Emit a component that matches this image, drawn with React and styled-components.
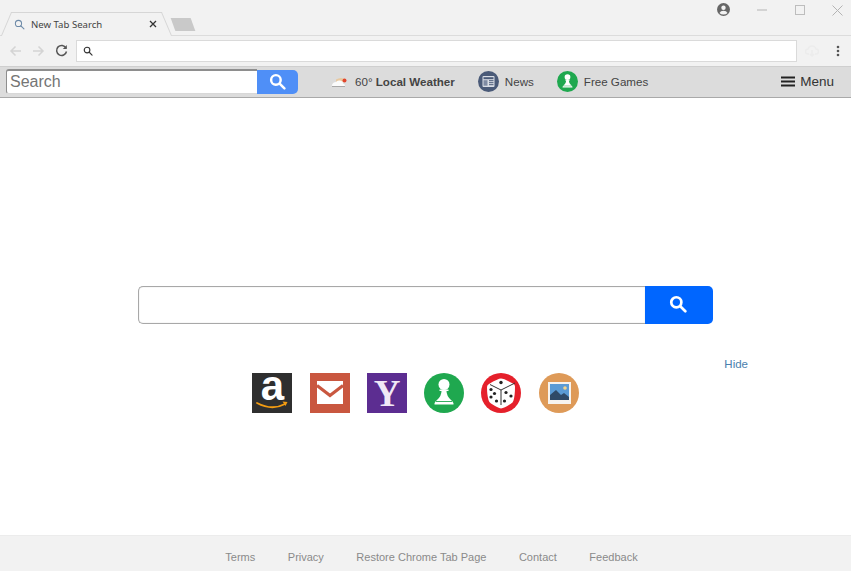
import React from 'react'
import styled, { createGlobalStyle } from 'styled-components'

const GlobalStyle = createGlobalStyle`
  html, body { margin: 0; padding: 0; background: #fff; overflow: hidden; }
  body { font-family: "Liberation Sans", Arial, sans-serif; }
  * { box-sizing: border-box; }
`

const Page = styled.div`
  width: 851px;
  height: 571px;
  display: flex;
  flex-direction: column;
`

// BROWSER CHROME
const TabStrip = styled.div`
  height: 36px;
  flex: none;
  display: flex;
  align-items: flex-end;
  background: #f2f2f2;
  border-bottom: 1px solid #dcdcdc;
  padding-left: 6px;
  position: relative;
`
const Tab = styled.div`
  width: 161px;
  height: 24px;
  margin-bottom: -1px;
  position: relative;
  display: flex;
  align-items: center;
  padding: 0 10px 0 8px;
  font-family: "Noto Sans", sans-serif;
  font-size: 9.6px;
  color: #444;
  z-index: 1;

  &::before, &::after {
    content: '';
    position: absolute;
    top: 0;
    bottom: 0;
    width: 60%;
    background: #f2f2f2;
    border-top: 1px solid #d6d6d6;
    z-index: -1;
  }
  &::before {
    left: 0;
    border-left: 1px solid #d6d6d6;
    transform: skewX(-23deg);
  }
  &::after {
    right: 0;
    border-right: 1px solid #d6d6d6;
    transform: skewX(23deg);
  }
`
const TabTitle = styled.span`
  margin-left: 6px;
  flex: 1;
`
const NewTab = styled.div`
  width: 20px;
  height: 13px;
  margin: 0 0 4px 6px;
  background: #c9c9c9;
  transform: skewX(20deg);
`
const WindowControls = styled.div`
  position: absolute;
  top: 0;
  right: 0;
  height: 20px;
  display: flex;
  align-items: center;
  gap: 9.5px;
`
const ProfileSlot = styled.div`
  display: flex;
  margin-right: 9px;
  margin-top: -1px;
`
const ControlSlot = styled.div`
  width: 28px;
  display: flex;
  justify-content: center;
`
const Toolbar = styled.div`
  height: 30px;
  flex: none;
  display: flex;
  align-items: center;
  background: #f2f2f2;
  padding: 0 11px 1px 4px;
`
const NavIcon = styled.div`
  width: 23px;
  display: flex;
  justify-content: center;
  margin-right: ${({ $gap }) => $gap || 0}px;
`
const AddressBar = styled.div`
  width: 721px;
  height: 22px;
  background: #fff;
  border: 1px solid #dadada;
  display: flex;
  align-items: center;
  padding-left: 6px;
`
const ToolbarEnd = styled.div`
  flex: 1;
  display: flex;
  align-items: center;
  justify-content: space-between;
  padding-left: 8px;
`

// SEARCH TOOLBAR
const Bar = styled.div`
  height: 32px;
  flex: none;
  display: flex;
  align-items: center;
  background: #dcdcdc;
  border-top: 1px solid #cfcfcf;
  border-bottom: 1px solid #a9a9a9;
  padding: 0 17px 1px 6px;
  font-size: 11.6px;
  color: #444;
`
const BarInput = styled.div`
  width: 251px;
  height: 25px;
  background: #fff;
  border: 1px solid #8e8e8e;
  border-top-width: 2px;
  border-bottom-color: #d8d8d8;
  border-right: none;
  border-radius: 3px 0 0 3px;
  font-size: 16px;
  line-height: 22px;
  padding-left: 3px;
  color: #757575;
`
const BarButton = styled.div`
  width: 41px;
  height: 24px;
  background: #4f8ff7;
  border-radius: 0 5px 5px 0;
  display: flex;
  align-items: center;
  justify-content: center;
  margin-right: 33px;
`
const BarItem = styled.div`
  display: flex;
  align-items: center;
  gap: ${({ $gap }) => $gap}px;
  margin-right: ${({ $after }) => $after}px;
`
const Menu = styled.div`
  margin-left: auto;
  display: flex;
  align-items: center;
  gap: 5px;
  font-size: 13.5px;
  color: #333;
`

// MAIN CONTENT
const Main = styled.main`
  flex: 1;
  display: flex;
  flex-direction: column;
  padding: 188px 0 0 138px;
`
const SearchRow = styled.div`
  width: 575px;
  height: 38px;
  display: flex;
`
const SearchInput = styled.div`
  flex: 1;
  border: 1px solid #a8a8a8;
  border-right: none;
  border-radius: 5px 0 0 5px;
  box-shadow: inset 0 0 1px #bbb;
`
const SearchButton = styled.div`
  width: 68px;
  background: #0066ff;
  border-radius: 0 5px 5px 0;
  display: flex;
  align-items: center;
  justify-content: center;
  padding: 0 3px 3px 0;
`
const HideRow = styled.div`
  width: 610px;
  margin-top: 33px;
  display: flex;
  justify-content: flex-end;
`
const HideLink = styled.a`
  font-size: 11.5px;
  line-height: 14px;
  color: #4a7fae;
`
const Tiles = styled.div`
  margin: 2px 0 0 114.300px;
  display: flex;
  gap: 17.300px;
`
const Tile = styled.svg`
  width: 40px;
  height: 40px;
  display: block;
  overflow: visible;
`

const Footer = styled.footer`
  height: 36px;
  flex: none;
  background: #f2f2f2;
  border-top: 1px solid #ececec;
  display: flex;
  align-items: center;
  justify-content: center;
  gap: 32.500px;
  padding: 7px 0 0 12px;
  font-size: 11px;
  color: #8a8a8a;
`

// ICONS
const SearchGlyph = ({ size, color, width = 2 }) => (
  <svg width={size} height={size} viewBox="0 0 16 16" fill="none" stroke={color} strokeWidth={width} strokeLinecap="round">
    <circle cx="6.500" cy="6.500" r="4.500" />
    <path d="M10 10l4.500 4.500" />
  </svg>
)

const WeatherIcon = () => (
  <svg width="18" height="12" viewBox="0 0 18 12">
    <path d="M5 3.500Q10 .5 15 3.500L14 6H5z" fill="#e8c9a0" />
    <circle cx="13.500" cy="4.500" r="2" fill="#e2452c" />
    <path d="M1 9q1-3 4-3 1-2 4-1.500 3 .5 3 3 2 0 2 2.500H2q-2 0-1-1z" fill="#fbfbfb" />
    <path d="M1 10.500h13" stroke="#a8a8a8" strokeWidth="1" />
  </svg>
)

const NewsIcon = () => (
  <svg width="21" height="21" viewBox="0 0 21 21">
    <circle cx="10.500" cy="10.500" r="10.500" fill="#4a5a78" />
    <rect x="4.500" y="5" width="12" height="11" rx="1" fill="#d9dde5" />
    <rect x="5.500" y="6.200" width="10" height="2" fill="#4a5a78" />
    <rect x="5.500" y="9.200" width="4" height="5.500" fill="#7f8ba3" />
    <path d="M11 9.700h4.500M11 11.700h4.500M11 13.700h4.500" stroke="#4a5a78" strokeWidth="1" />
  </svg>
)

const PawnIcon = ({ size }) => (
  <svg width={size} height={size} viewBox="0 0 40 40" style={{ display: 'block', flex: 'none' }}>
    <circle cx="20" cy="20" r="20" fill="#1fa84f" />
    <circle cx="20" cy="11.500" r="5.500" fill="#fff" />
    <path d="M15.500 16.500h9v1.500h-2q0 5 4.500 9 3 2.500 2.500 4.500H10.500q-.5-2 2.500-4.500 4.500-4 4.500-9h-2z" fill="#fff" />
    <path d="M12 28.500h16" stroke="#1fa84f" strokeWidth=".9" />
  </svg>
)

const ProfileIcon = () => (
  <svg width="13" height="13" viewBox="0 0 13 13">
    <circle cx="6.500" cy="6.500" r="6.500" fill="#666" />
    <circle cx="6.500" cy="4.800" r="2.200" fill="#f2f2f2" />
    <path d="M2.500 10q1-2.300 4-2.300t4 2.300q-1.500 1.500-4 1.500t-4-1.500z" fill="#f2f2f2" />
  </svg>
)

const App = () => (
  <Page>
    <GlobalStyle />
    <TabStrip>
      <Tab>
        <SearchGlyph size={11} color="#6d8aa8" width={1.500} />
        <TabTitle>New Tab Search</TabTitle>
        <svg width="8" height="8" viewBox="0 0 8 8" stroke="#333" strokeWidth="1.300">
          <path d="M1 1l6 6M7 1l-6 6" />
        </svg>
      </Tab>
      <NewTab />
      <WindowControls>
        <ProfileSlot><ProfileIcon /></ProfileSlot>
        <ControlSlot>
          <svg width="10" height="2" stroke="#b4b4b4"><path d="M0 1h10" /></svg>
        </ControlSlot>
        <ControlSlot>
          <svg width="10" height="10" fill="none" stroke="#bdbdbd"><rect x=".5" y=".5" width="9" height="9" /></svg>
        </ControlSlot>
        <ControlSlot>
          <svg width="11" height="11" stroke="#b4b4b4"><path d="M.5.5l10 10M10.500.5l-10 10" /></svg>
        </ControlSlot>
      </WindowControls>
    </TabStrip>
    <Toolbar>
      <NavIcon>
        <svg width="13" height="12" viewBox="0 0 13 12" fill="none" stroke="#d4d4d4" strokeWidth="1.500"><path d="M12 6H2M6.500 1.500L2 6l4.500 4.500" /></svg>
      </NavIcon>
      <NavIcon>
        <svg width="13" height="12" viewBox="0 0 13 12" fill="none" stroke="#d4d4d4" strokeWidth="1.500"><path d="M1 6h10M6.500 1.500L11 6l-4.500 4.500" /></svg>
      </NavIcon>
      <NavIcon $gap={3}>
        <svg width="13" height="13" viewBox="0 0 13 13" fill="none" stroke="#555" strokeWidth="1.500">
          <path d="M11 4A5 5 0 1 0 11.500 7.500" />
          <path d="M11.800 1v4h-4z" fill="#555" stroke="none" />
        </svg>
      </NavIcon>
      <AddressBar><SearchGlyph size={10} color="#333" width={1.800} /></AddressBar>
      <ToolbarEnd>
        <svg width="14" height="12" viewBox="0 0 14 12" fill="none" stroke="#ececec" strokeWidth="1.500"><path d="M4 9H3a2.500 2.500 0 0 1 0-5q1-3 4-3t4 3a2.500 2.500 0 0 1 0 5h-1M7 5v6M5 9l2 2 2-2" /></svg>
        <svg width="4" height="12" viewBox="0 0 4 12" fill="#555"><circle cx="2" cy="2" r="1.300" /><circle cx="2" cy="6" r="1.300" /><circle cx="2" cy="10" r="1.300" /></svg>
      </ToolbarEnd>
    </Toolbar>
    <Bar>
      <BarInput>Search</BarInput>
      <BarButton><SearchGlyph size={17} color="#fff" width={2.300} /></BarButton>
      <BarItem $gap={6} $after={23}>
        <WeatherIcon />
        <span>60° <b>Local Weather</b></span>
      </BarItem>
      <BarItem $gap={6} $after={23}>
        <NewsIcon />
        <span>News</span>
      </BarItem>
      <BarItem $gap={6} $after={0}>
        <PawnIcon size={21} />
        <span>Free Games</span>
      </BarItem>
      <Menu>
        <svg width="14" height="11" stroke="#222" strokeWidth="2"><path d="M0 1.500h14M0 5.500h14M0 9.500h14" /></svg>
        <span>Menu</span>
      </Menu>
    </Bar>
    <Main>
      <SearchRow>
        <SearchInput />
        <SearchButton><SearchGlyph size={18} color="#fff" width={2.400} /></SearchButton>
      </SearchRow>
      <HideRow><HideLink>Hide</HideLink></HideRow>
      <Tiles>
        <Tile viewBox="0 0 40 40">
          <rect width="40" height="40" fill="#2f2f2f" />
          <text x="20.500" y="27" textAnchor="middle" fontFamily="Liberation Sans" fontWeight="700" fontSize="42" fill="#fff">a</text>
          <path d="M5 30q15 8 28 1" fill="none" stroke="#f39c12" strokeWidth="1.800" strokeLinecap="round" />
          <path d="M30.500 28.500l5 .5-2 4z" fill="#f39c12" />
        </Tile>
        <Tile viewBox="0 0 40 40">
          <rect width="40" height="40" fill="#c9573f" />
          <rect x="7" y="8" width="26" height="23" fill="#fff" />
          <path d="M7 12.500l13 10 13-10" fill="none" stroke="#c9573f" strokeWidth="3.200" />
        </Tile>
        <Tile viewBox="0 0 40 40">
          <rect width="40" height="40" fill="#5c2d91" />
          <text x="20" y="32.500" textAnchor="middle" fontFamily="Liberation Serif" fontWeight="700" fontSize="37" fill="#f0e8f6">Y</text>
        </Tile>
        <PawnIcon size={40} />
        <Tile viewBox="0 0 40 40">
          <circle cx="20" cy="20" r="20" fill="#e5202b" />
          <path d="M20 5.500q3 0 12 5 2 1 2 3 0 9-1.500 14-.5 2-3 3.500-6 4-9.500 4.500-3-.5-10-5-2-1.500-2.500-3.500Q6 22 6 14q0-2 2-3 9-5.500 12-5.500z" fill="#fff" />
          <path d="M20 17L9 11.500M20 17l14-7M20 17v15" stroke="#333" strokeWidth="1" fill="none" />
          <g fill="#222">
            <circle cx="20" cy="9.500" r="1.700" />
            <circle cx="10" cy="16.500" r="1.600" /><circle cx="13.500" cy="20.500" r="1.600" />
            <circle cx="10" cy="24" r="1.600" /><circle cx="15.500" cy="28" r="1.600" />
            <circle cx="25" cy="19.500" r="1.600" /><circle cx="23.500" cy="28" r="1.600" />
            <circle cx="30" cy="23" r="1.600" />
          </g>
        </Tile>
        <Tile viewBox="0 0 40 40">
          <circle cx="20" cy="20" r="20" fill="#de9a58" />
          <rect x="9" y="9" width="23" height="22" fill="#f7f3ee" />
          <rect x="11" y="11" width="19" height="16" fill="#5b9bd5" />
          <path d="M11 27v-5l6-5 5 5 3-2 5 4v3z" fill="#2f4a68" />
          <circle cx="26" cy="15" r="1.800" fill="#f4d58d" />
        </Tile>
      </Tiles>
    </Main>
    <Footer>
      <span>Terms</span>
      <span>Privacy</span>
      <span>Restore Chrome Tab Page</span>
      <span>Contact</span>
      <span>Feedback</span>
    </Footer>
  </Page>
)

export default App
